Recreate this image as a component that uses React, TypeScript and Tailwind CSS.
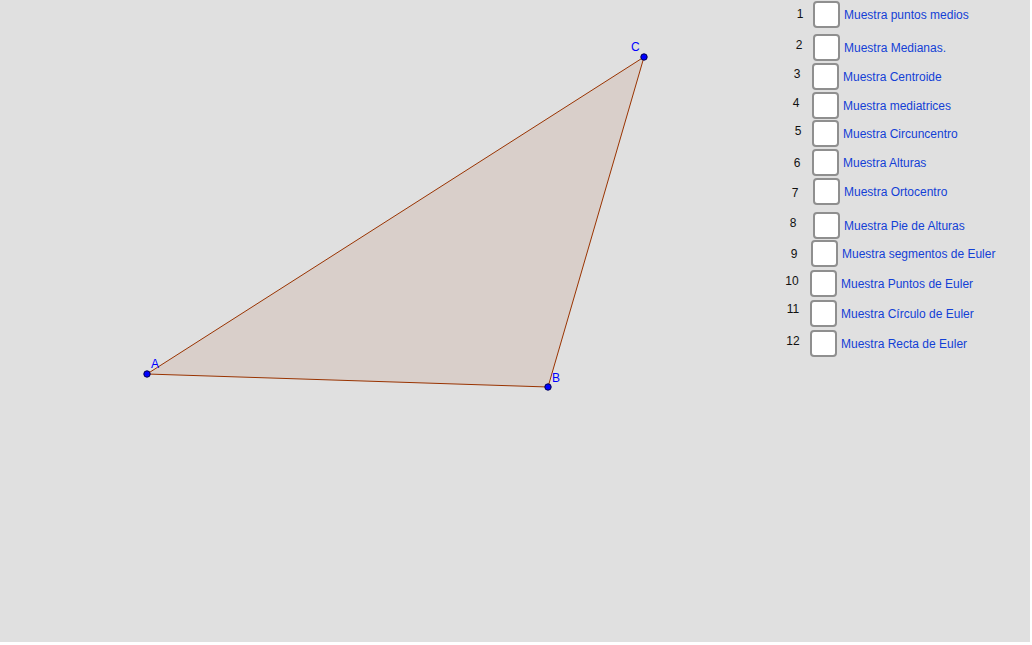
import React from "react";

type Item = {
  num: string;
  numPos: string;
  boxPos: string;
  label: string;
};

// GeoGebra checkboxes, each sits at its own spot on the canvas
const items: Item[] = [
  { num: "1", numPos: "left-[790px] top-[7px]", boxPos: "left-[813px] top-[1px]", label: "Muestra puntos medios" },
  { num: "2", numPos: "left-[789px] top-[38px]", boxPos: "left-[813px] top-[34px]", label: "Muestra Medianas." },
  { num: "3", numPos: "left-[787px] top-[67px]", boxPos: "left-[812px] top-[63px]", label: "Muestra Centroide" },
  { num: "4", numPos: "left-[786px] top-[96px]", boxPos: "left-[812px] top-[92px]", label: "Muestra mediatrices" },
  { num: "5", numPos: "left-[788px] top-[124px]", boxPos: "left-[812px] top-[120px]", label: "Muestra Circuncentro" },
  { num: "6", numPos: "left-[787px] top-[156px]", boxPos: "left-[812px] top-[149px]", label: "Muestra Alturas" },
  { num: "7", numPos: "left-[785px] top-[186px]", boxPos: "left-[813px] top-[178px]", label: "Muestra Ortocentro" },
  { num: "8", numPos: "left-[783px] top-[216px]", boxPos: "left-[813px] top-[212px]", label: "Muestra Pie de Alturas" },
  { num: "9", numPos: "left-[784px] top-[247px]", boxPos: "left-[811px] top-[240px]", label: "Muestra segmentos de Euler" },
  { num: "10", numPos: "left-[782px] top-[274px]", boxPos: "left-[810px] top-[270px]", label: "Muestra Puntos de Euler" },
  { num: "11", numPos: "left-[783px] top-[302px]", boxPos: "left-[810px] top-[300px]", label: "Muestra Círculo de Euler" },
  { num: "12", numPos: "left-[783px] top-[334px]", boxPos: "left-[810px] top-[330px]", label: "Muestra Recta de Euler" },
];

const A = { x: 147, y: 374 };
const B = { x: 548, y: 387 };
const C = { x: 644, y: 57 };

const Triangle = () => (
  <svg
    className="absolute inset-0"
    width={1030}
    height={642}
    viewBox="0 0 1030 642"
  >
    <polygon
      points={`${A.x},${A.y} ${B.x},${B.y} ${C.x},${C.y}`}
      fill="#d9cfca"
      stroke="#993300"
      strokeWidth={1}
    />
    {[A, B, C].map((p, i) => (
      <circle
        key={i}
        cx={p.x}
        cy={p.y}
        r={3.2}
        fill="#0000ff"
        stroke="#000050"
        strokeWidth={1}
      />
    ))}
    <g
      fill="#0000ff"
      fontSize={12}
      fontFamily="'Liberation Sans', Arial, sans-serif"
    >
      <text x={151} y={368}>A</text>
      <text x={552} y={382}>B</text>
      <text x={631} y={51}>C</text>
    </g>
  </svg>
);

export default function App() {
  return (
    <div className="h-[645px] w-[1032px] bg-white font-['Liberation_Sans',Arial,sans-serif]">
      <div className="relative h-[642px] w-[1030px] overflow-hidden bg-[#e0e0e0]">
        <Triangle />
        {items.map((it) => (
          <React.Fragment key={it.num}>
            <span
              className={`absolute ${it.numPos} w-[20px] text-center text-[12px] leading-[14px] text-[#111]`}
            >
              {it.num}
            </span>
            <label className={`absolute ${it.boxPos} flex items-center`}>
              <span className="h-[27px] w-[27px] rounded-[4px] border-2 border-[#8f8f8f] bg-white" />
              <span className="ml-[4px] whitespace-nowrap text-[12px] leading-[14px] text-[#1340d6]">
                {it.label}
              </span>
            </label>
          </React.Fragment>
        ))}
      </div>
    </div>
  );
}
